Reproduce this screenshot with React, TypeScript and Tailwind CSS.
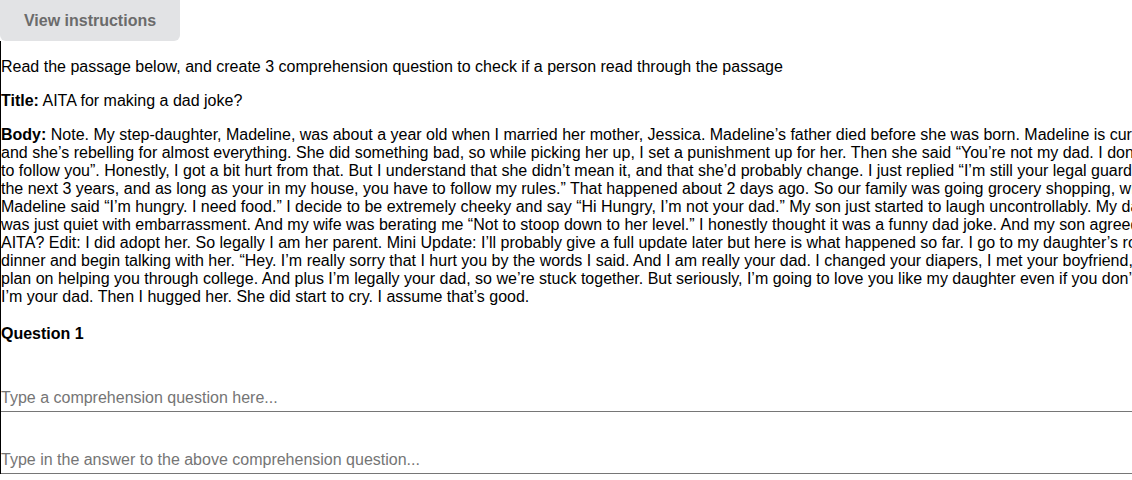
import React from "react";

const bodyLines: string[] = [
  "Note. My step-daughter, Madeline, was about a year old when I married her mother, Jessica. Madeline’s father died before she was born. Madeline is currently 13",
  "and she’s rebelling for almost everything. She did something bad, so while picking her up, I set a punishment up for her. Then she said “You’re not my dad. I don’t have",
  "to follow you”. Honestly, I got a bit hurt from that. But I understand that she didn’t mean it, and that she’d probably change. I just replied “I’m still your legal guardian for",
  "the next 3 years, and as long as your in my house, you have to follow my rules.” That happened about 2 days ago. So our family was going grocery shopping, when",
  "Madeline said “I’m hungry. I need food.” I decide to be extremely cheeky and say “Hi Hungry, I’m not your dad.” My son just started to laugh uncontrollably. My daughter",
  "was just quiet with embarrassment. And my wife was berating me “Not to stoop down to her level.” I honestly thought it was a funny dad joke. And my son agreed.",
  "AITA? Edit: I did adopt her. So legally I am her parent. Mini Update: I’ll probably give a full update later but here is what happened so far. I go to my daughter’s room after",
  "dinner and begin talking with her. “Hey. I’m really sorry that I hurt you by the words I said. And I am really your dad. I changed your diapers, I met your boyfriend, and I",
  "plan on helping you through college. And plus I’m legally your dad, so we’re stuck together. But seriously, I’m going to love you like my daughter even if you don’t think",
  "I’m your dad. Then I hugged her. She did start to cry. I assume that’s good.",
];

export default function App() {
  return (
    <div className="w-full h-[480px] overflow-hidden bg-white text-black font-['Liberation_Sans',Arial,sans-serif] text-[16px] leading-[18px]">
      <button className="block w-[180px] h-[41px] pt-[1px] rounded-b-md bg-[#e2e3e5] text-[#6b6b6b] font-bold">
        View instructions
      </button>

      <div className="border-l border-black pt-[17px]">
        <p>Read the passage below, and create 3 comprehension question to check if a person read through the passage</p>

        <p className="mt-4">
          <span className="font-bold">Title:</span> AITA for making a dad joke?
        </p>

        <p className="mt-4 whitespace-nowrap">
          {bodyLines.map((line, i) => (
            <React.Fragment key={i}>
              {i === 0 && <span className="font-bold">Body: </span>}
              {line}
              {i < bodyLines.length - 1 && <br />}
            </React.Fragment>
          ))}
        </p>

        <p className="mt-[19px] font-bold">Question 1</p>

        <input
          type="text"
          placeholder="Type a comprehension question here..."
          className="block w-full mt-[34px] pt-3 pb-1 border-b border-[#767676] outline-none placeholder:text-[#757575] bg-transparent"
        />
        <input
          type="text"
          placeholder="Type in the answer to the above comprehension question..."
          className="block w-full mt-[27px] pt-3 pb-1 border-b border-[#767676] outline-none placeholder:text-[#757575] bg-transparent"
        />
      </div>
    </div>
  );
}
